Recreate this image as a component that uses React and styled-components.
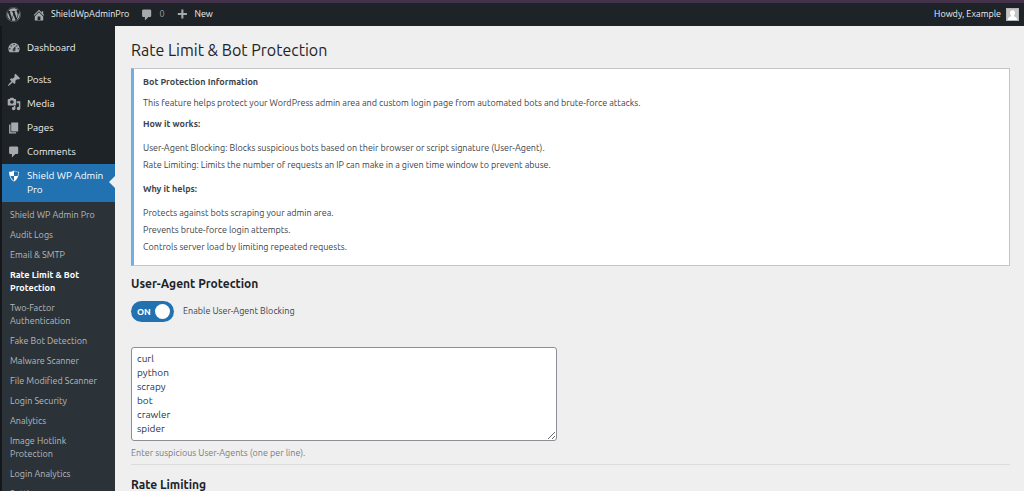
import React from "react";
import styled, { createGlobalStyle, css } from "styled-components";
import { FaWordpress } from "react-icons/fa";

const GlobalStyle = createGlobalStyle`
  *, *::before, *::after { box-sizing: border-box; }
  body {
    margin: 0;
    background: #efeff0;
    color: #3c434a;
    font-family: Ubuntu, "Noto Sans", "Open Sans", sans-serif;
    font-size: 9px;
    line-height: 13px;
  }
  h1, h2, h3, p, ul { margin: 0; padding: 0; }
  ul { list-style: none; }
  a { color: inherit; text-decoration: none; }
`;

const Page = styled.div`
  display: flex;
  flex-direction: column;
  height: 100vh;
  overflow: hidden;
  border-top: 3px solid #43324a;
`;

const AdminBar = styled.header`
  display: flex;
  align-items: center;
  flex: none;
  height: 23px;
  padding: 0 5px 0 6px;
  gap: 11px;
  background: #1d2327;
  color: #f0f0f1;
`;

const BarLink = styled.a`
  display: flex;
  align-items: center;
  gap: 5px;
  color: ${(p) => (p.$dim ? "#9ca2a7" : "#f0f0f1")};
  ${(p) => p.$end && css`margin-left: auto;`}
`;

const Icon = styled.svg`
  flex: none;
  width: 14px;
  height: 14px;
  fill: ${(p) => p.$color || "#a7aaad"};
`;

const WordPressMark = styled(FaWordpress)`
  display: block;
  width: 15px;
  height: 15px;
  color: #a7aaad;
`;

const Avatar = styled.svg`
  width: 13px;
  height: 13px;
  background: #c6c6c6;
  border: 1px solid #b4b6b9;
`;

const Body = styled.div`
  display: flex;
  flex: 1;
  min-height: 0;
`;

const Sidebar = styled.nav`
  flex: none;
  width: 115px;
  padding-top: 10px;
  border-left: 2px solid #15171a;
  background: #1d2327;
`;

const MenuLink = styled.a`
  position: relative;
  display: flex;
  gap: 6px;
  padding: 5px 8px 5px 5px;
  font-size: 10px;
  line-height: 14px;
  color: #f0f0f1;
  ${(p) => p.$spaced && css`margin-bottom: 8px;`}
  ${(p) =>
    p.$current &&
    css`
      background: #2271b1;
      color: #fff;
      &::after {
        content: "";
        position: absolute;
        right: 0;
        top: 12px;
        border: 6px solid transparent;
        border-left-width: 0;
        border-right-color: #efeff0;
      }
    `}
`;

const SubMenu = styled.ul`
  display: flex;
  flex-direction: column;
  gap: 7px;
  && { padding: 7px 8px; }
  background: #2c3338;
`;

const SubLink = styled.a`
  display: block;
  color: ${(p) => (p.$current ? "#fff" : "#b4b9be")};
  font-weight: ${(p) => (p.$current ? 700 : 400)};
`;

const Content = styled.main`
  flex: 1;
  min-width: 0;
  padding: 13px 14px 0 16px;
`;

const Title = styled.h1`
  && { margin-bottom: 7px; }
  color: #1d2327;
  font-size: 16px;
  line-height: 22px;
  font-weight: 400;
`;

const Notice = styled.section`
  padding: 7px 10px 0 9px;
  border: 1px solid #c3c4c7;
  border-left: 3px solid #72aee6;
  background: #fff;
`;

const NoticeHeading = styled.h3`
  font-size: 9px;
  line-height: 13px;
  font-weight: 700;
`;

const NoticeText = styled.p`
  && { margin: 8px 0; }
`;

const NoticeList = styled.ul`
  && { margin: 9px 0; }
  line-height: 17px;
`;

const SectionTitle = styled.h2`
  && { margin-top: 9px; }
  color: #1d2327;
  font-size: 12px;
  line-height: 18px;
  font-weight: 700;
`;

const SwitchRow = styled.label`
  display: flex;
  align-items: center;
  gap: 9px;
  margin: 8px 0 25px;
`;

const Switch = styled.span`
  position: relative;
  display: flex;
  align-items: center;
  width: 43px;
  height: 21px;
  padding: 4px 6px 2px;
  border-radius: 11px;
  background: #2271b1;
  color: #fff;
  font-weight: 600;
  &::after {
    content: "";
    position: absolute;
    top: 3px;
    right: 4px;
    width: 15px;
    height: 15px;
    border-radius: 50%;
    background: #fff;
  }
`;

const SwitchInput = styled.input`
  position: absolute;
  inset: 0;
  width: 100%;
  height: 100%;
  margin: 0;
  opacity: 0;
`;

const AgentList = styled.textarea`
  display: block;
  width: 426px;
  max-width: 100%;
  height: 94px;
  padding: 4px 5px;
  border: 1px solid #8c8f94;
  border-radius: 3px;
  background: #fff;
  color: #2c3338;
  font: inherit;
  font-size: 10px;
  line-height: 14px;
  overflow: hidden;
  resize: both;
`;

const Hint = styled.p`
  && { padding: 6px 0 4px; }
  color: #787c82;
`;

const Divider = styled.hr`
  margin: 0 0 11px;
  border: 0;
  border-top: 1px solid #dcdcde;
`;

const paths = {
  home: "M16 8.5l1.53 1.53-1.06 1.06L10 4.6l-6.47 6.49-1.06-1.06L10 2.5l4 4v-2h2v4zm-6-2.46l6 5.99V18H4v-5.97zM12 17v-5H8v5h4z",
  comment: "M5 2h9q.82 0 1.41.59T16 4v7q0 .82-.59 1.41T14 13h-2l-5 5v-5H5q-.82 0-1.41-.59T3 11V4q0-.82.59-1.41T5 2z",
  plus: "M17 7v3h-5v5H9v-5H4V7h5V2h3v5h5z",
  dashboard: "M3.76 16h12.48c1.1-1.37 1.76-3.11 1.76-5 0-4.42-3.58-8-8-8s-8 3.58-8 8c0 1.89.66 3.63 1.76 5zM10 4c.55 0 1 .45 1 1s-.45 1-1 1-1-.45-1-1 .45-1 1-1zM6 6c.55 0 1 .45 1 1s-.45 1-1 1-1-.45-1-1 .45-1 1-1zm8 0c.55 0 1 .45 1 1s-.45 1-1 1-1-.45-1-1 .45-1 1-1zm-5.37 5.55L12 7v6c0 1.1-.9 2-2 2s-2-.9-2-2c0-.57.24-1.08.63-1.45zM4 10c.55 0 1 .45 1 1s-.45 1-1 1-1-.45-1-1 .45-1 1-1zm12 0c.55 0 1 .45 1 1s-.45 1-1 1-1-.45-1-1 .45-1 1-1zm-5 3c0-.55-.45-1-1-1s-1 .45-1 1 .45 1 1 1 1-.45 1-1z",
  post: "M10.44 3.02l1.82-1.82 6.36 6.35-1.83 1.82c-1.05-.68-2.48-.57-3.41.36l-.75.75c-.92.93-1.04 2.35-.35 3.41l-1.83 1.82-2.41-2.41-2.8 2.79c-.42.42-3.38 2.71-3.8 2.29s1.86-3.39 2.28-3.81l2.79-2.79L4.1 9.36l1.83-1.82c1.05.69 2.48.57 3.4-.36l.75-.75c.93-.92 1.05-2.35.36-3.41z",
  media: "M13 11V4c0-.55-.45-1-1-1h-1.67L9 1H5L3.67 3H2c-.55 0-1 .45-1 1v7c0 .55.45 1 1 1h10c.55 0 1-.45 1-1zM7 4.5c1.38 0 2.5 1.12 2.5 2.5S8.38 9.5 7 9.5 4.5 8.38 4.5 7 5.62 4.5 7 4.5zM14 6h5v10.5c0 1.38-1.12 2.5-2.5 2.5S14 17.88 14 16.5s1.12-2.5 2.5-2.5c.17 0 .34.02.5.05V9h-3V6zm-4 8.05V13h2v3.5c0 1.38-1.12 2.5-2.5 2.5S7 17.88 7 16.5 8.12 14 9.5 14c.17 0 .34.02.5.05z",
  page: "M6 15V2h10v13H6zm-1 1h8v2H3V5h2v11z",
  shield: "M10 2s3 2 7 2c0 11-7 14-7 14S3 15 3 4c4 0 7-2 7-2zm0 8h5s1-1 1-5c0 0-5-1-6-2v7H5c1 4 5 7 5 7v-7z",
};

function Glyph({ name, color }) {
  return (
    <Icon viewBox="0 0 20 20" $color={color} aria-hidden="true">
      <path fillRule="evenodd" d={paths[name]} />
    </Icon>
  );
}

const menu = [
  { label: "Dashboard", icon: "dashboard", spaced: true },
  { label: "Posts", icon: "post" },
  { label: "Media", icon: "media" },
  { label: "Pages", icon: "page" },
  { label: "Comments", icon: "comment" },
  { label: "Shield WP Admin Pro", icon: "shield", current: true },
];

const submenu = [
  "Shield WP Admin Pro",
  "Audit Logs",
  "Email & SMTP",
  "Rate Limit & Bot Protection",
  "Two-Factor Authentication",
  "Fake Bot Detection",
  "Malware Scanner",
  "File Modified Scanner",
  "Login Security",
  "Analytics",
  "Image Hotlink Protection",
  "Login Analytics",
  "Settings",
];

export default function App() {
  return (
    <Page>
      <GlobalStyle />
      <AdminBar>
        <BarLink href="#" aria-label="About WordPress"><WordPressMark /></BarLink>
        <BarLink href="#"><Glyph name="home" />ShieldWpAdminPro</BarLink>
        <BarLink href="#" $dim><Glyph name="comment" />0</BarLink>
        <BarLink href="#"><Glyph name="plus" />New</BarLink>
        <BarLink href="#" $end>
          Howdy, Example
          <Avatar viewBox="0 0 12 12" aria-hidden="true">
            <path fill="#fff" d="M6 1.5a2.7 2.7 0 0 1 2.7 2.8c0 1.3-.6 2.2-1.2 2.7v.8c1.8.5 3.5 1.4 3.5 4.2H1c0-2.8 1.7-3.7 3.5-4.2V7c-.6-.5-1.2-1.4-1.2-2.7A2.7 2.7 0 0 1 6 1.5z" />
          </Avatar>
        </BarLink>
      </AdminBar>
      <Body>
        <Sidebar aria-label="Admin menu">
          {menu.map((m) => (
            <MenuLink key={m.label} href="#" $spaced={m.spaced} $current={m.current}>
              <Glyph name={m.icon} color={m.current ? "#fff" : undefined} />
              <span>{m.label}</span>
            </MenuLink>
          ))}
          <SubMenu>
            {submenu.map((label) => (
              <li key={label}>
                <SubLink href="#" $current={label.startsWith("Rate")}>{label}</SubLink>
              </li>
            ))}
          </SubMenu>
        </Sidebar>
        <Content>
          <Title>Rate Limit &amp; Bot Protection</Title>
          <Notice>
            <NoticeHeading>Bot Protection Information</NoticeHeading>
            <NoticeText>
              This feature helps protect your WordPress admin area and custom login page from automated bots and brute-force attacks.
            </NoticeText>
            <NoticeHeading>How it works:</NoticeHeading>
            <NoticeList>
              <li>User-Agent Blocking: Blocks suspicious bots based on their browser or script signature (User-Agent).</li>
              <li>Rate Limiting: Limits the number of requests an IP can make in a given time window to prevent abuse.</li>
            </NoticeList>
            <NoticeHeading>Why it helps:</NoticeHeading>
            <NoticeList>
              <li>Protects against bots scraping your admin area.</li>
              <li>Prevents brute-force login attempts.</li>
              <li>Controls server load by limiting repeated requests.</li>
            </NoticeList>
          </Notice>
          <SectionTitle>User-Agent Protection</SectionTitle>
          <SwitchRow>
            <Switch>
              ON
              <SwitchInput type="checkbox" defaultChecked />
            </Switch>
            Enable User-Agent Blocking
          </SwitchRow>
          <AgentList
            aria-label="Suspicious User-Agents"
            defaultValue={"curl\npython\nscrapy\nbot\ncrawler\nspider"}
          />
          <Hint>Enter suspicious User-Agents (one per line).</Hint>
          <Divider />
          <SectionTitle>Rate Limiting</SectionTitle>
        </Content>
      </Body>
    </Page>
  );
}
